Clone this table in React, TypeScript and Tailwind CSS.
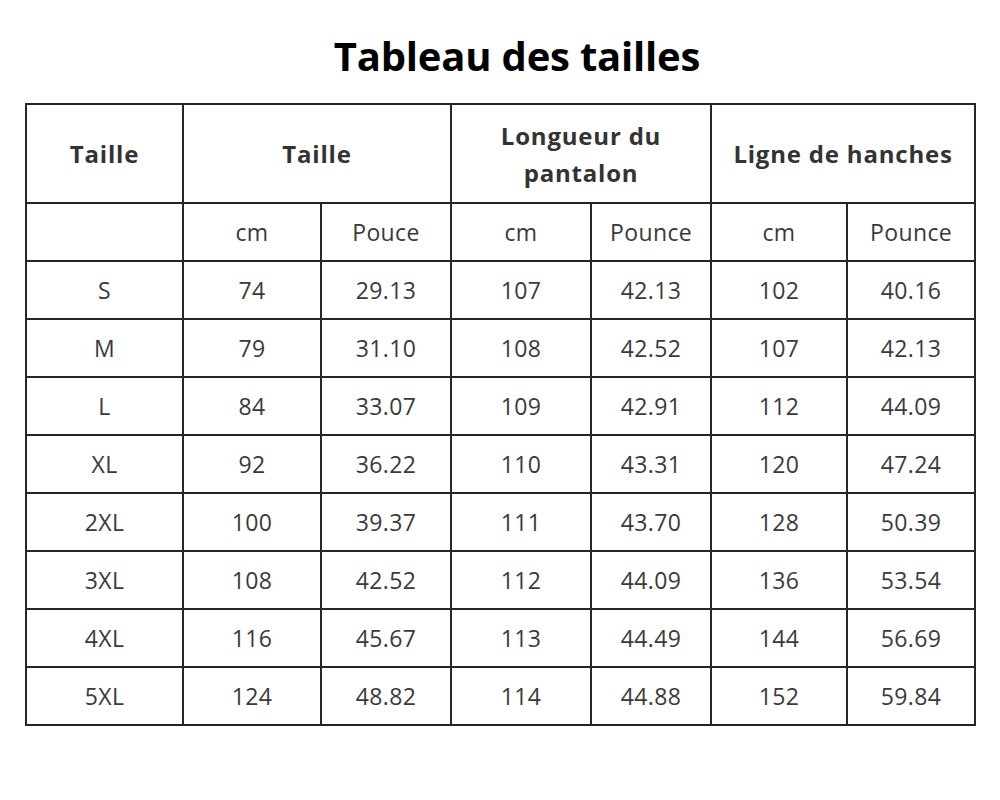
const units = ['cm', 'Pouce', 'cm', 'Pounce', 'cm', 'Pounce']

const rows = [
  ['S', '74', '29.13', '107', '42.13', '102', '40.16'],
  ['M', '79', '31.10', '108', '42.52', '107', '42.13'],
  ['L', '84', '33.07', '109', '42.91', '112', '44.09'],
  ['XL', '92', '36.22', '110', '43.31', '120', '47.24'],
  ['2XL', '100', '39.37', '111', '43.70', '128', '50.39'],
  ['3XL', '108', '42.52', '112', '44.09', '136', '53.54'],
  ['4XL', '116', '45.67', '113', '44.49', '144', '56.69'],
  ['5XL', '124', '48.82', '114', '44.88', '152', '59.84'],
]

const cell = 'border-2 border-[#262626] text-center align-middle p-0'

export default function App() {
  return (
    <div className="w-[1000px] h-[800px] bg-white font-['Open_Sans',sans-serif] text-[#3a3a3a]">
      <h1 className="pt-[30px] h-[103px] text-center text-[40px] font-bold text-black leading-[52px] tracking-[-0.2px] pl-[34px]">
        Tableau des tailles
      </h1>

      <table className="ml-[25px] w-[949px] border-collapse table-fixed">
        <colgroup>
          <col className="w-[157px]" />
          <col className="w-[138px]" />
          <col className="w-[130px]" />
          <col className="w-[140px]" />
          <col className="w-[120px]" />
          <col className="w-[136px]" />
          <col className="w-[128px]" />
        </colgroup>
        <thead>
          <tr className="h-[99px] text-[24px] font-semibold leading-[37px] tracking-[0.8px] text-[#333]">
            <th className={cell}>Taille</th>
            <th className={cell} colSpan={2}>Taille</th>
            <th className={cell} colSpan={2}>
              Longueur du
              <br />
              pantalon
            </th>
            <th className={cell} colSpan={2}>Ligne de hanches</th>
          </tr>
          <tr className="h-[58px] text-[23px] tracking-[0.4px]">
            <td className={cell}></td>
            {units.map((u, i) => (
              <td key={i} className={cell}>{u}</td>
            ))}
          </tr>
        </thead>
        <tbody>
          {rows.map((r) => (
            <tr key={r[0]} className="h-[58px] text-[23px] tracking-[0.4px]">
              {r.map((v, i) => (
                <td key={i} className={cell}>{v}</td>
              ))}
            </tr>
          ))}
        </tbody>
      </table>
    </div>
  )
}
